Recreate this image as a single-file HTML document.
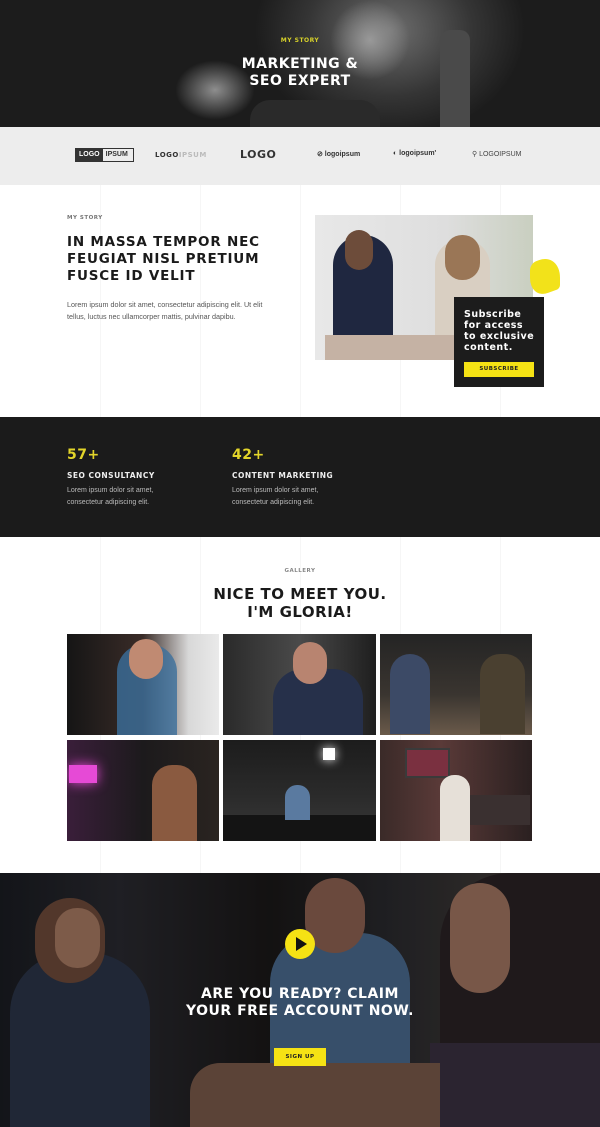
<!DOCTYPE html>
<html><head><meta charset="utf-8"><style>
*{margin:0;padding:0;box-sizing:border-box}
body{width:600px;height:1127px;font-family:"Liberation Sans",sans-serif;background:#fff;position:relative;overflow:hidden}
.a{position:absolute}
.h{font-family:"DejaVu Sans","Liberation Sans",sans-serif;font-weight:bold;letter-spacing:.5px}
.p{font-size:7px;line-height:12px}
.ph{position:absolute;overflow:hidden}
.line{position:absolute;top:185px;width:1px;height:690px;background:rgba(0,0,0,.035)}
</style></head><body>
<!-- hero -->
<div class="a" style="left:0;top:0;width:600px;height:127px;background:radial-gradient(ellipse 150px 120px at 390px 30px,#6e6e6e,#353535 55%,#1c1c1c 90%)"></div>
<div class="a" style="left:330px;top:0;width:80px;height:80px;background:radial-gradient(ellipse at center,#999,rgba(60,60,60,0) 70%)"></div>
<div class="a" style="left:175px;top:60px;width:80px;height:60px;background:radial-gradient(ellipse at center,#8e8e8e,rgba(60,60,60,0) 70%)"></div>
<div class="a" style="left:440px;top:30px;width:30px;height:97px;background:#4a4a4a;border-radius:10px 10px 0 0"></div>
<div class="a" style="left:250px;top:100px;width:130px;height:27px;background:#2a2a2a;border-radius:20px 20px 0 0"></div>
<div class="a h" style="left:0;width:600px;top:37px;text-align:center;font-size:6px;color:#d6d02a">MY STORY</div>
<div class="a h" style="left:0;width:600px;top:56px;text-align:center;font-size:14px;line-height:17px;color:#fff">MARKETING &amp;<br>SEO EXPERT</div>
<!-- logos -->
<div class="a" style="left:0;top:127px;width:600px;height:58px;background:#ededed"></div>
<div class="a" style="left:75px;top:148px;width:59px;height:14px;border:1px solid #333;font-size:7px;font-weight:bold;display:flex"><span style="background:#333;color:#fff;padding:2px 3px">LOGO</span><span style="padding:2px 3px;color:#333">IPSUM</span></div>
<div class="a h" style="left:155px;top:151px;font-size:7px;color:#333">LOGO<span style="color:#bbb">IPSUM</span></div>
<div class="a h" style="left:240px;top:148px;font-size:11px;color:#333">LOGO</div>
<div class="a" style="left:317px;top:150px;font-size:7px;font-weight:bold;color:#333">⊘ logoipsum</div>
<div class="a" style="left:393px;top:150px;font-size:7px;font-weight:bold;color:#333">◐ logoipsum'</div>
<div class="a" style="left:472px;top:150px;font-size:7px;color:#444">⚲ LOGOIPSUM</div>
<!-- grid lines -->
<div class="line" style="left:100px"></div><div class="line" style="left:200px"></div><div class="line" style="left:300px"></div><div class="line" style="left:400px"></div><div class="line" style="left:500px"></div>
<!-- story -->
<div class="a h" style="left:67px;top:215px;font-size:5.5px;color:#777">MY STORY</div>
<div class="a h" style="left:67px;top:234px;font-size:13.5px;line-height:17px;color:#1a1a1a;letter-spacing:.8px">IN MASSA TEMPOR NEC<br>FEUGIAT NISL PRETIUM<br>FUSCE ID VELIT</div>
<div class="a p" style="left:67px;top:299px;width:215px;font-size:7.2px;color:#555">Lorem ipsum dolor sit amet, consectetur adipiscing elit. Ut elit tellus, luctus nec ullamcorper mattis, pulvinar dapibu.</div>
<div class="ph" style="left:315px;top:215px;width:218px;height:145px;background:linear-gradient(90deg,#e8e8e8,#dedede 60%,#c9cfc0)">
 <div class="a" style="left:18px;top:20px;width:60px;height:125px;background:#1f2740;border-radius:30px 30px 0 0"></div>
 <div class="a" style="left:30px;top:15px;width:28px;height:40px;background:#6d4c3a;border-radius:14px"></div>
 <div class="a" style="left:120px;top:25px;width:55px;height:100px;background:#d9cfc2;border-radius:25px 25px 0 0"></div>
 <div class="a" style="left:130px;top:20px;width:35px;height:45px;background:#9a7656;border-radius:17px"></div>
 <div class="a" style="left:10px;top:120px;width:200px;height:25px;background:#c5b2a4"></div>
</div>
<div class="a" style="left:530px;top:258px;width:30px;height:36px;background:#f2e21a;border-radius:20% 70% 10% 60%;transform:skewY(-20deg)"></div>
<div class="a" style="left:454px;top:297px;width:90px;height:90px;background:#1c1c1c"></div>
<div class="a h" style="left:464px;top:309px;font-size:9.5px;line-height:11px;color:#fff">Subscribe<br>for access<br>to exclusive<br>content.</div>
<div class="a h" style="left:464px;top:362px;width:70px;height:15px;background:#f5e214;font-size:5.5px;line-height:15px;text-align:center;color:#222">SUBSCRIBE</div>
<!-- stats -->
<div class="a" style="left:0;top:417px;width:600px;height:120px;background:#1b1b1b"></div>
<div class="a h" style="left:67px;top:447px;font-size:14px;color:#e3d52a">57+</div>
<div class="a h" style="left:232px;top:447px;font-size:14px;color:#e3d52a">42+</div>
<div class="a h" style="left:67px;top:471px;font-size:7.5px;color:#eee">SEO CONSULTANCY</div>
<div class="a h" style="left:232px;top:471px;font-size:7.5px;color:#eee">CONTENT MARKETING</div>
<div class="a p" style="left:67px;top:485px;color:#bbb">Lorem ipsum dolor sit amet,<br>consectetur adipiscing elit.</div>
<div class="a p" style="left:232px;top:485px;color:#bbb">Lorem ipsum dolor sit amet,<br>consectetur adipiscing elit.</div>
<!-- gallery -->
<div class="a h" style="left:0;width:600px;top:568px;text-align:center;font-size:5.5px;color:#888">GALLERY</div>
<div class="a h" style="left:0;width:600px;top:585px;text-align:center;font-size:15px;line-height:18px;color:#1a1a1a">NICE TO MEET YOU.<br>I'M GLORIA!</div>
<div class="ph" style="left:67px;top:634px;width:152px;height:101px;background:linear-gradient(90deg,#151515,#3a2c28 50%,#d8d8d8 80%,#eaeaea)"><div class="a" style="left:50px;top:10px;width:60px;height:91px;background:#3b6f9c;border-radius:28px 28px 0 0;opacity:.8"></div><div class="a" style="left:62px;top:5px;width:34px;height:40px;background:#c08a72;border-radius:17px"></div></div>
<div class="ph" style="left:223px;top:634px;width:153px;height:101px;background:linear-gradient(90deg,#2a2a2a,#4a4a4a 50%,#1f1f1f)"><div class="a" style="left:50px;top:35px;width:90px;height:66px;background:#26304a;border-radius:30px 30px 0 0"></div><div class="a" style="left:70px;top:8px;width:34px;height:42px;background:#b88470;border-radius:17px"></div></div>
<div class="ph" style="left:380px;top:634px;width:152px;height:101px;background:linear-gradient(180deg,#242424,#3a3530 60%,#6a5a4a)"><div class="a" style="left:10px;top:20px;width:40px;height:80px;background:#3c4a66;border-radius:20px 20px 0 0"></div><div class="a" style="left:100px;top:20px;width:45px;height:80px;background:#4a4030;border-radius:20px 20px 0 0"></div></div>
<div class="ph" style="left:67px;top:740px;width:152px;height:101px;background:linear-gradient(90deg,#3a1e3a,#1c1a1c 50%,#2a2420)"><div class="a" style="left:2px;top:25px;width:28px;height:18px;background:#e64ad6;box-shadow:0 0 12px #e64ad6"></div><div class="a" style="left:85px;top:25px;width:45px;height:76px;background:#8a5a40;border-radius:20px 20px 0 0"></div></div>
<div class="ph" style="left:223px;top:740px;width:153px;height:101px;background:linear-gradient(180deg,#1c1c1c,#2c2c2c 60%,#3a3a3a)"><div class="a" style="left:100px;top:8px;width:12px;height:12px;background:#fff;box-shadow:0 0 10px #fff"></div><div class="a" style="left:0;top:75px;width:153px;height:26px;background:#141414"></div><div class="a" style="left:62px;top:45px;width:25px;height:35px;background:#5a7aa0;border-radius:12px 12px 0 0"></div></div>
<div class="ph" style="left:380px;top:740px;width:152px;height:101px;background:linear-gradient(90deg,#3a2a28,#5a3a38 40%,#2a2020)"><div class="a" style="left:25px;top:8px;width:45px;height:30px;background:#7a3040;border:2px solid #3a3a3a"></div><div class="a" style="left:60px;top:35px;width:30px;height:66px;background:#e6e0d8;border-radius:14px 14px 0 0"></div><div class="a" style="left:90px;top:55px;width:60px;height:30px;background:#3a3030"></div></div>
<!-- CTA -->
<div class="ph" style="left:0;top:873px;width:600px;height:254px;background:linear-gradient(90deg,#1a1c22,#2a2a30 20%,#1a1818 45%,#2a2a2e 65%,#3a3634 80%,#4a3a34)">
 <div class="a" style="left:10px;top:80px;width:140px;height:180px;background:#2b3548;border-radius:60px 60px 0 0"></div>
 <div class="a" style="left:35px;top:25px;width:70px;height:85px;background:#6e4a3a;border-radius:35px"></div>
 <div class="a" style="left:55px;top:35px;width:45px;height:60px;background:#a77a62;border-radius:22px"></div>
 <div class="a" style="left:270px;top:60px;width:140px;height:150px;background:#4a6a8e;border-radius:50px 50px 0 0"></div>
 <div class="a" style="left:305px;top:5px;width:60px;height:75px;background:#8e6252;border-radius:30px"></div>
 <div class="a" style="left:440px;top:0;width:160px;height:254px;background:#2a2224;border-radius:70px 0 0 0"></div>
 <div class="a" style="left:450px;top:10px;width:60px;height:110px;background:#a07460;border-radius:30px"></div>
 <div class="a" style="left:430px;top:170px;width:170px;height:84px;background:#3a3040"></div>
 <div class="a" style="left:190px;top:190px;width:250px;height:64px;background:#7a5a4a;border-radius:30px 0 0 0"></div>
 <div class="a" style="left:0;top:0;width:600px;height:254px;background:rgba(0,0,0,.25)"></div>
</div>
<div class="a" style="left:285px;top:929px;width:30px;height:30px;border-radius:50%;background:#f5e214"></div>
<div class="a" style="left:296px;top:937px;width:0;height:0;border-left:11px solid #111;border-top:7px solid transparent;border-bottom:7px solid transparent"></div>
<div class="a h" style="left:0;width:600px;top:986px;text-align:center;font-size:14px;line-height:17px;color:#fff">ARE YOU READY? CLAIM<br>YOUR FREE ACCOUNT NOW.</div>
<div class="a h" style="left:274px;top:1048px;width:52px;height:18px;background:#f5e214;font-size:5.5px;line-height:18px;text-align:center;color:#222">SIGN UP</div>
</body></html>
